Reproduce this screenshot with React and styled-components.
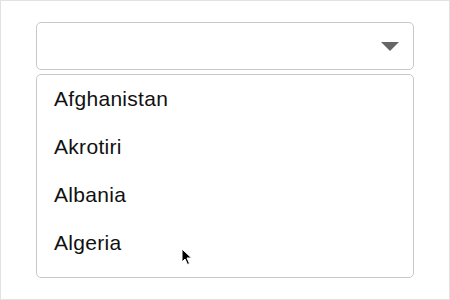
import React from 'react';
import styled, { createGlobalStyle } from 'styled-components';

const GlobalStyle = createGlobalStyle`
    html, body {
        margin: 0;
        padding: 0;
        background: #ffffff;
    }
    * {
        box-sizing: border-box;
    }
`
const Frame = styled.div`
    width: 450px;
    height: 300px;
    border: 1px solid #e2e2e2;
    background: #ffffff;
    padding: 21px 35px 0 35px;
    position: relative;
    font-family: "Liberation Sans", Arial, sans-serif;
`
const SelectBox = styled.div`
    height: 48px;
    border: 1px solid #c9c9c9;
    border-radius: 5px;
    display: flex;
    align-items: center;
    justify-content: flex-end;
    padding-right: 14px;
`
const Caret = styled.div`
    width: 0;
    height: 0;
    border-left: 9px solid transparent;
    border-right: 9px solid transparent;
    border-top: 9px solid #666666;
`
const OptionList = styled.ul`
    list-style: none;
    margin: 4px 0 0 0;
    padding: 0 0 10px 0;
    border: 1px solid #c9c9c9;
    border-radius: 5px;
`
const Option = styled.li`
    height: 48px;
    display: flex;
    align-items: center;
    padding-left: 17px;
    font-size: 21px;
    color: #111111;
    letter-spacing: 0.3px;
`
const Pointer = styled.svg`
    position: absolute;
    left: 180px;
    top: 247px;
`

const countries = ["Afghanistan", "Akrotiri", "Albania", "Algeria"];

const App = () => {
    return (
        <Frame>
            <GlobalStyle />
            <SelectBox>
                <Caret />
            </SelectBox>
            <OptionList>
                {countries.map((c) => (
                    <Option key={c}>{c}</Option>
                ))}
            </OptionList>
            <Pointer width="12" height="18" viewBox="0 0 12 18">
                <path d="M1 1 L1 14 L4 11 L6.5 16.5 L8.5 15.5 L6 10 L10.5 10 Z" fill="#000" stroke="#fff" strokeWidth="1" />
            </Pointer>
        </Frame>
    )
}
export default App;
